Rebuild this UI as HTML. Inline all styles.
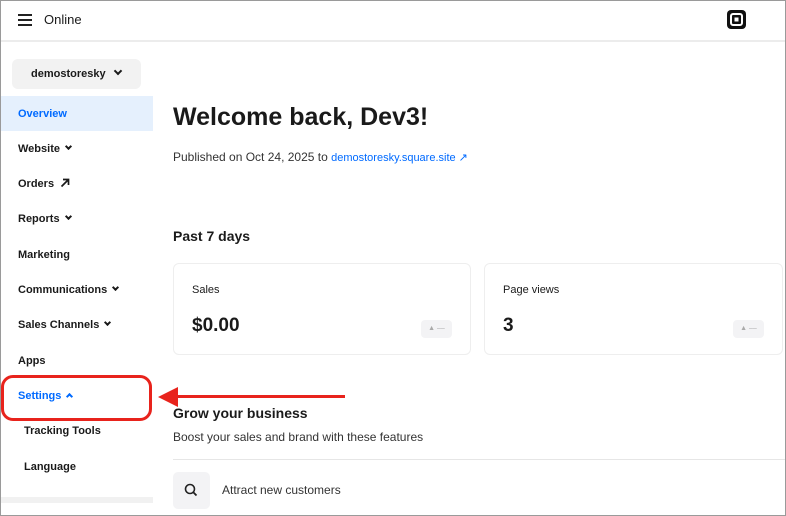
<!DOCTYPE html>
<html><head><style>
*{margin:0;padding:0;box-sizing:border-box}
body{width:786px;height:516px;overflow:hidden;background:#fff;font-family:"Liberation Sans",Arial,sans-serif;color:#1a1a1a;position:relative}
.frame{position:absolute;inset:0;border:1px solid #9a9a9a;pointer-events:none;z-index:10}
.hdr{position:absolute;left:0;top:0;width:786px;height:42px;border-bottom:2px solid #ececec}
.abs{position:absolute}
.nav{position:absolute;left:18px;font-size:11px;font-weight:bold;color:#1a1a1a;line-height:14px;height:14px}
.chev{display:inline-block;width:5px;height:5px;border-right:2px solid #1a1a1a;border-bottom:2px solid #1a1a1a;transform:rotate(45deg);margin-left:6px;position:relative;top:-3px}
.card{position:absolute;top:263px;height:92px;border:1px solid #eee;border-radius:6px}
.pill{position:absolute;right:18px;top:56px;width:31px;height:18px;background:#f3f3f5;border-radius:4px;font-size:7px;color:#aaa;text-align:center;line-height:18px}
</style></head><body>
<div class="hdr">
 <div class="abs" style="left:18px;top:14px;width:14px;height:2px;background:#222;box-shadow:0 5px 0 #222,0 10px 0 #222"></div>
 <div class="abs" style="left:44px;top:12px;font-size:13px">Online</div>
 <svg class="abs" style="left:727px;top:10px" width="19" height="19" viewBox="0 0 19 19"><rect width="19" height="19" rx="4" fill="#111"/><rect x="4" y="4" width="11" height="11" rx="2" fill="none" stroke="#fff" stroke-width="2"/><rect x="7.5" y="7.5" width="4" height="4" fill="#fff"/></svg>
</div>
<div class="abs" style="left:12px;top:59px;width:129px;height:30px;background:#f2f2f2;border-radius:6px;font-size:11px;font-weight:bold;line-height:30px;padding-left:19px">demostoresky <span class="chev" style="width:6px;height:6px"></span></div>
<div class="abs" style="left:0;top:96px;width:153px;height:35px;background:#e5f0fd"></div>
<div class="nav" style="top:107px;color:#006aff">Overview</div>
<div class="nav" style="top:142px">Website<span class="chev"></span></div>
<div class="nav" style="top:177px">Orders<svg style="margin-left:6px;vertical-align:-1px" width="10" height="10" viewBox="0 0 10 10"><path d="M1.5 8.5 L8.5 1.5 M3 1.5 H8.5 V7" fill="none" stroke="#1a1a1a" stroke-width="1.7"/></svg></div>
<div class="nav" style="top:212px">Reports<span class="chev"></span></div>
<div class="nav" style="top:248px">Marketing</div>
<div class="nav" style="top:283px">Communications<span class="chev"></span></div>
<div class="nav" style="top:318px">Sales Channels<span class="chev"></span></div>
<div class="nav" style="top:354px">Apps</div>
<div class="nav" style="top:389px;color:#006aff">Settings<span class="chev" style="border-color:#006aff;transform:rotate(225deg);top:0"></span></div>
<div class="nav" style="top:424px;left:24px">Tracking Tools</div>
<div class="nav" style="top:460px;left:24px">Language</div>
<div class="abs" style="left:0;top:497px;width:153px;height:6px;background:#f1f1f1"></div>
<div class="abs" style="left:1px;top:375px;width:151px;height:46px;border:3px solid #e8231c;border-radius:12px"></div>
<div class="abs" style="left:175px;top:395px;width:170px;height:3px;background:#e8231c"></div>
<div class="abs" style="left:158px;top:387px;width:0;height:0;border-top:10px solid transparent;border-bottom:10px solid transparent;border-right:20px solid #e8231c"></div>

<div class="abs" style="left:173px;top:103px;font-size:25px;font-weight:bold">Welcome back, Dev3!</div>
<div class="abs" style="left:173px;top:150px;font-size:12px;color:#333">Published on Oct 24, 2025 to <span style="color:#006aff;font-size:11px">demostoresky.square.site &#8599;</span></div>
<div class="abs" style="left:173px;top:228px;font-size:14px;font-weight:bold">Past 7 days</div>
<div class="card" style="left:173px;width:298px"><div class="abs" style="left:18px;top:20px;font-size:11px">Sales</div><div class="abs" style="left:18px;top:51px;font-size:19px;font-weight:bold">$0.00</div><div class="pill">&#9650; &ndash;&ndash;</div></div>
<div class="card" style="left:484px;width:299px"><div class="abs" style="left:18px;top:20px;font-size:11px">Page views</div><div class="abs" style="left:18px;top:51px;font-size:19px;font-weight:bold">3</div><div class="pill">&#9650; &ndash;&ndash;</div></div>
<div class="abs" style="left:173px;top:405px;font-size:14px;font-weight:bold">Grow your business</div>
<div class="abs" style="left:173px;top:430px;font-size:12px;color:#333">Boost your sales and brand with these features</div>
<div class="abs" style="left:173px;top:459px;width:613px;height:1px;background:#e6e6e6"></div>
<div class="abs" style="left:173px;top:472px;width:37px;height:37px;background:#f3f3f5;border-radius:5px">
<svg width="37" height="37" viewBox="0 0 37 37"><circle cx="17" cy="17" r="4.5" fill="none" stroke="#222" stroke-width="1.6"/><line x1="20.3" y1="20.3" x2="23.5" y2="23.5" stroke="#222" stroke-width="1.8"/></svg></div>
<div class="abs" style="left:222px;top:483px;font-size:12px;color:#333">Attract new customers</div>
<div class="frame"></div>
</body></html>
